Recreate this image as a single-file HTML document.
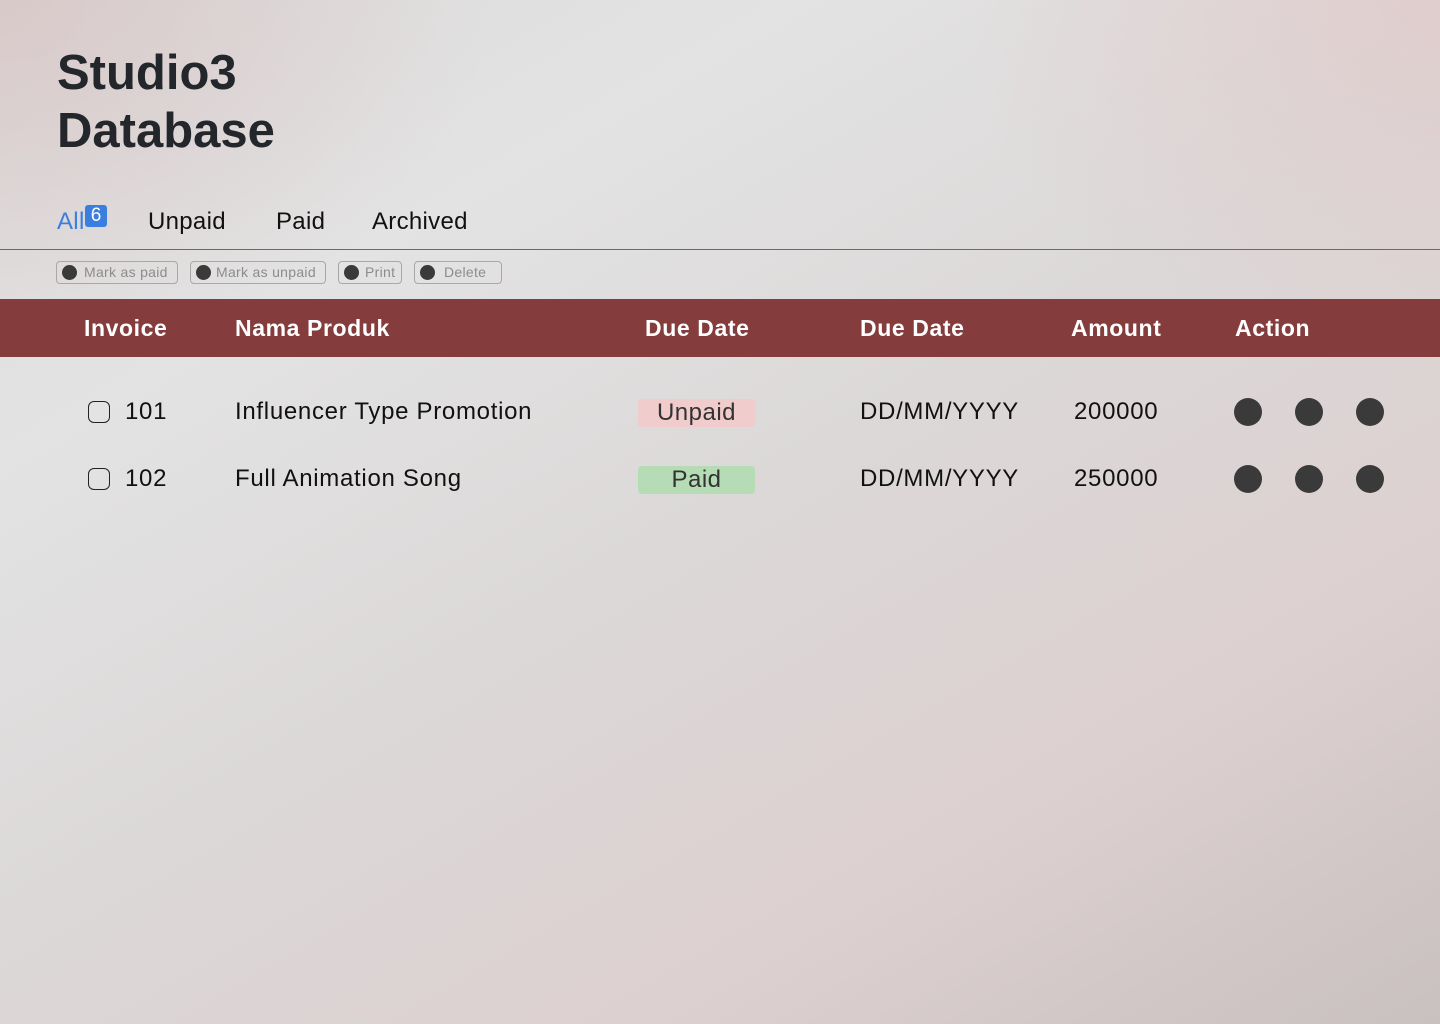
<!DOCTYPE html>
<html><head><meta charset="utf-8"><style>
*{margin:0;padding:0;box-sizing:border-box}
body{width:1440px;height:1024px;overflow:hidden;font-family:"Liberation Sans",sans-serif;position:relative;
background:
radial-gradient(ellipse 700px 500px at 0% 0%,rgba(215,190,190,.6),transparent 70%),
radial-gradient(ellipse 700px 500px at 100% 0%,rgba(225,200,200,.7),transparent 70%),
linear-gradient(150deg,#dcdada 0%,#e3e3e3 25%,#dcd8d8 50%,#ddd0d0 75%,#c9c0c0 100%);}
.a{position:absolute;white-space:nowrap}
h1{position:absolute;left:57px;top:44px;font-size:49px;line-height:58px;font-weight:700;color:#23262b;letter-spacing:0}
.tab{font-size:24px;color:#111;top:208px;letter-spacing:.3px}
.badge{position:absolute;left:85px;top:205px;width:22px;height:22px;background:#3a7fe0;color:#fff;border-radius:3px;font-size:19px;text-align:center;line-height:22px}
.line{position:absolute;left:0;top:249px;width:1440px;height:1px;background:#6a6a6a}
.btn{position:absolute;top:261px;height:23px;border:1px solid #a8a8a8;border-radius:4px;font-size:14px;color:#8c8c8c;line-height:21px;padding-left:27px;letter-spacing:.3px}
.btn:before{content:"";position:absolute;left:5px;top:3px;width:15px;height:15px;border-radius:50%;background:#3a3a3a}
.hdr{position:absolute;left:0;top:299px;width:1440px;height:58px;background:#843c3c}
.h{font-size:23px;font-weight:700;color:#fff;top:315px;letter-spacing:.6px}
.r{font-size:24px;color:#111;letter-spacing:.7px}
.cb{position:absolute;left:88px;width:22px;height:22px;border:1.5px solid #222;border-radius:6px}
.pill{position:absolute;left:638px;width:117px;height:28px;border-radius:4px;font-size:24px;text-align:center;line-height:28px;color:#333;letter-spacing:.5px}
.dot{position:absolute;width:28px;height:28px;border-radius:50%;background:#3a3a3a}
</style></head><body>
<h1>Studio3<br>Database</h1>
<div class="a tab" style="left:57px;color:#3a7fe0">All</div><div class="badge">6</div>
<div class="a tab" style="left:148px">Unpaid</div>
<div class="a tab" style="left:276px">Paid</div>
<div class="a tab" style="left:372px">Archived</div>
<div class="line"></div>
<div class="btn" style="left:56px;width:122px">Mark as paid</div>
<div class="btn" style="left:190px;width:136px;padding-left:25px">Mark as unpaid</div>
<div class="btn" style="left:338px;width:64px;padding-left:26px">Print</div>
<div class="btn" style="left:414px;width:88px;padding-left:29px">Delete</div>
<div class="hdr"></div>
<div class="a h" style="left:84px">Invoice</div>
<div class="a h" style="left:235px">Nama Produk</div>
<div class="a h" style="left:645px">Due Date</div>
<div class="a h" style="left:860px">Due Date</div>
<div class="a h" style="left:1071px">Amount</div>
<div class="a h" style="left:1235px">Action</div>

<div class="cb" style="top:401px"></div>
<div class="a r" style="left:125px;top:398px">101</div>
<div class="a r" style="left:235px;top:398px">Influencer Type Promotion</div>
<div class="pill" style="top:399px;background:#f0cccc">Unpaid</div>
<div class="a r" style="left:860px;top:398px">DD/MM/YYYY</div>
<div class="a r" style="left:1074px;top:398px">200000</div>
<div class="dot" style="left:1234px;top:398px"></div><div class="dot" style="left:1295px;top:398px"></div><div class="dot" style="left:1356px;top:398px"></div>

<div class="cb" style="top:468px"></div>
<div class="a r" style="left:125px;top:465px">102</div>
<div class="a r" style="left:235px;top:465px">Full Animation Song</div>
<div class="pill" style="top:466px;background:#b6dcb6">Paid</div>
<div class="a r" style="left:860px;top:465px">DD/MM/YYYY</div>
<div class="a r" style="left:1074px;top:465px">250000</div>
<div class="dot" style="left:1234px;top:465px"></div><div class="dot" style="left:1295px;top:465px"></div><div class="dot" style="left:1356px;top:465px"></div>
</body></html>
